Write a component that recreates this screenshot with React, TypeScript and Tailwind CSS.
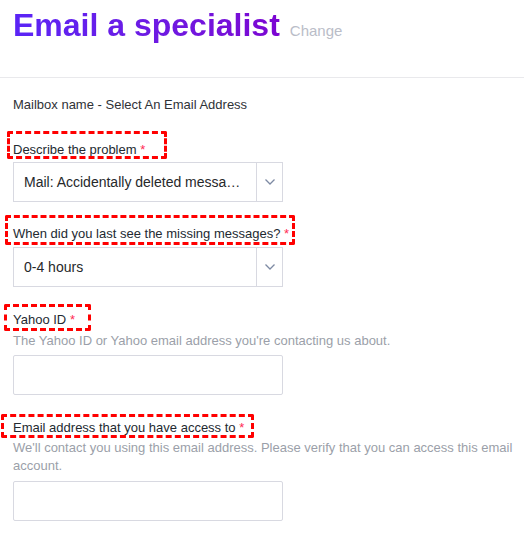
import React from 'react';

const font = { fontFamily: '"Liberation Sans", Arial, sans-serif' };

function Annot({ left, top, w, h }: { left: number; top: number; w: number; h: number }) {
  return (
    <span
      className="absolute border-[3px] border-dashed border-[#ff0000] rounded-[2px] pointer-events-none"
      style={{ left, top, width: w, height: h }}
    />
  );
}

function Label({ text, box }: { text: string; box: { left: number; top: number; w: number; h: number } }) {
  return (
    <div className="flex">
      <div className="relative text-[13px] leading-[18px] text-[#232a31]">
        {text} <span className="text-[#ff2b55]">*</span>
        <Annot {...box} />
      </div>
    </div>
  );
}

function Chevron() {
  return (
    <svg width="12" height="8" viewBox="0 0 12 8" fill="none">
      <path d="M1.5 1.5 L6 6 L10.5 1.5" stroke="#7d8aa3" strokeWidth="1.3" />
    </svg>
  );
}

function Select({ value }: { value: string }) {
  return (
    <div className="flex h-10 w-[270px] border border-[#d8d9e1] bg-white">
      <div className="flex-1 min-w-0 pl-[10px] flex items-center text-[14px] text-[#26282a] whitespace-nowrap">
        {value}
      </div>
      <div className="w-[26px] border-l border-[#d8d9e1] flex items-center justify-center">
        <Chevron />
      </div>
    </div>
  );
}

export default function App() {
  return (
    <div className="w-[524px] h-[536px] bg-white overflow-hidden" style={font}>
      <div className="h-[78px] border-b border-[#e9e9ec] px-[13px] pt-[7px] flex items-baseline">
        <h1 className="text-[32px] leading-[37px] font-bold bg-linear-to-r from-[#5a24f6] to-[#7c04d2] bg-clip-text text-transparent">
          Email a specialist
        </h1>
        <span className="ml-[10px] text-[15px] text-[#babdc8]">Change</span>
      </div>

      <div className="pl-[13px] pr-[10px]">
        <div className="pt-[18px] text-[13px] leading-[18px] text-[#2f3237]">
          Mailbox name - Select An Email Address
        </div>

        <div className="mt-[27px]">
          <Label text="Describe the problem" box={{ left: -6, top: -10, w: 160, h: 28 }} />
        </div>
        <div className="mt-[3px]">
          <Select value="Mail: Accidentally deleted messa…" />
        </div>

        <div className="mt-[23px]">
          <Label text="When did you last see the missing messages?" box={{ left: -8, top: -10, w: 290, h: 30 }} />
        </div>
        <div className="mt-1">
          <Select value="0-4 hours" />
        </div>

        <div className="mt-[24px]">
          <Label text="Yahoo ID" box={{ left: -9, top: -7, w: 87, h: 27 }} />
        </div>
        <div className="mt-[3px] text-[13px] leading-[18px] text-[#9b9fa9]">
          The Yahoo ID or Yahoo email address you're contacting us about.
        </div>
        <input className="mt-[5px] block h-10 w-[270px] border border-[#d8d9e1] rounded-[2px] outline-none" />

        <div className="mt-[24px]">
          <Label text="Email address that you have access to" box={{ left: -12, top: -5, w: 253, h: 24 }} />
        </div>
        <div className="mt-[2px] text-[13px] leading-[18px] text-[#9b9fa9]">
          We'll contact you using this email address. Please verify that you can access this email account.
        </div>
        <input className="mt-[6px] block h-10 w-[270px] border border-[#d8d9e1] rounded-[2px] outline-none" />
      </div>
    </div>
  );
}
